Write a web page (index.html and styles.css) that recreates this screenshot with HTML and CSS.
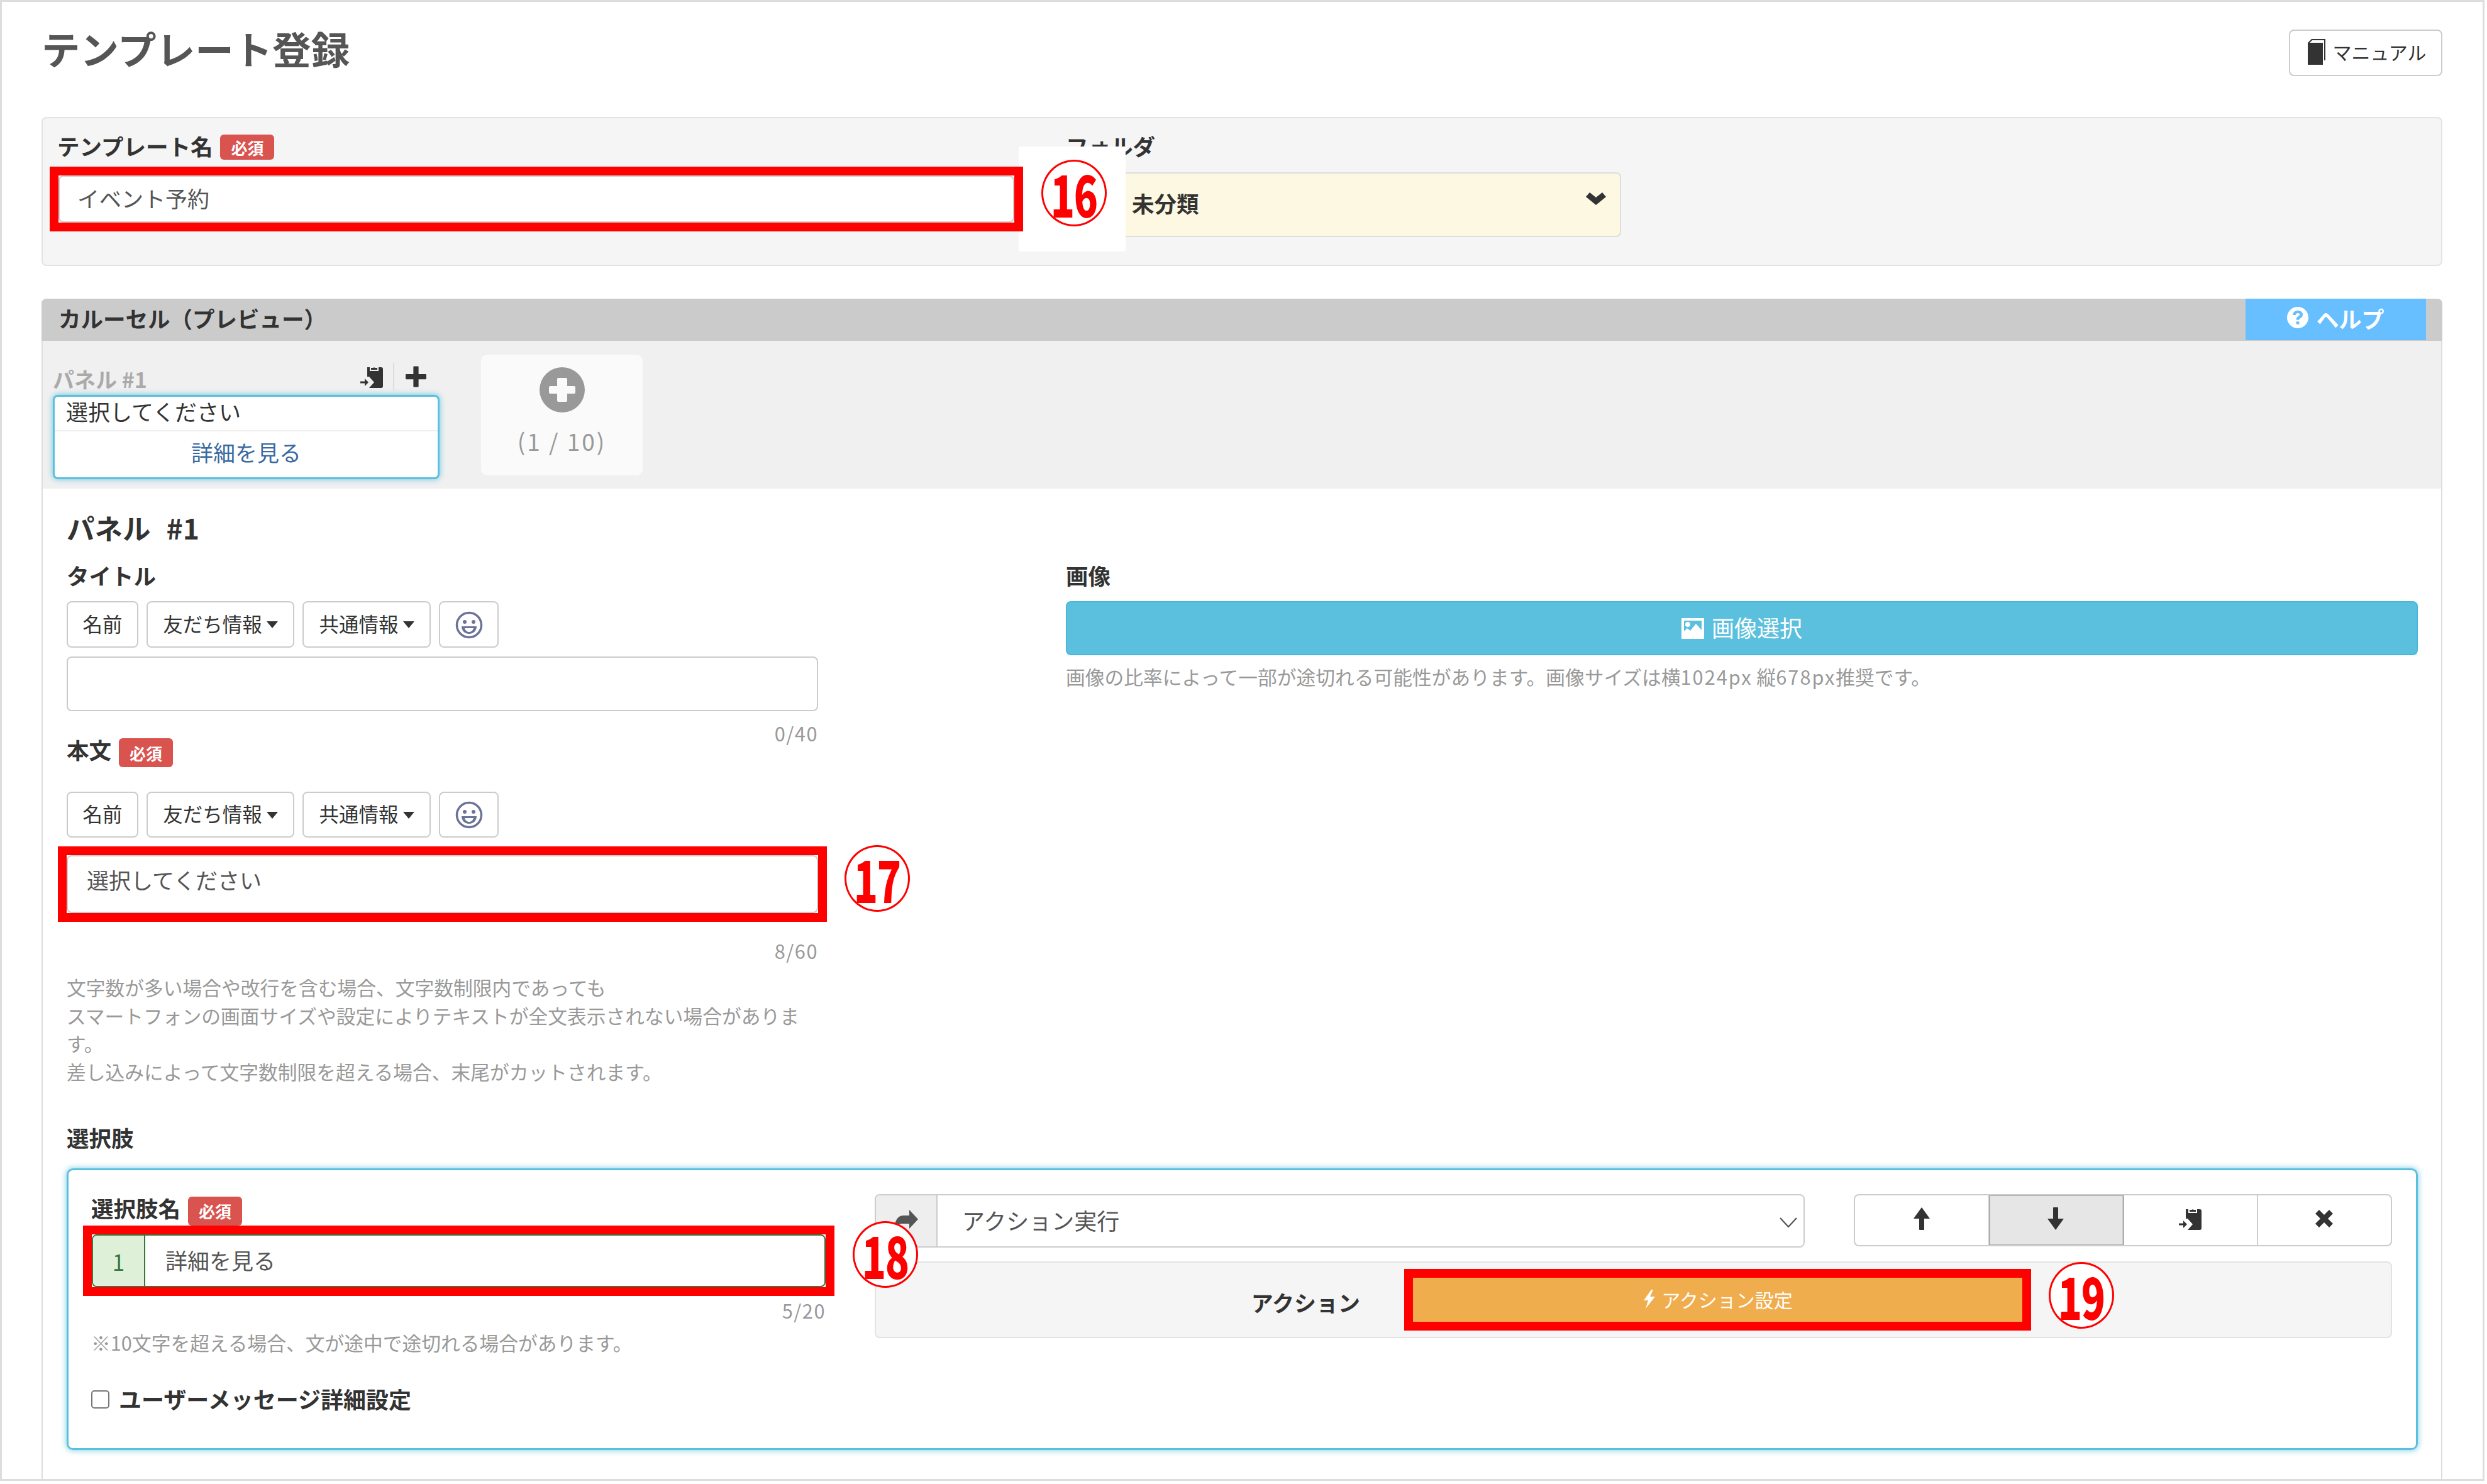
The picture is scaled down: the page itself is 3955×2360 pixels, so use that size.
FILE: index.html
```html
<!DOCTYPE html>
<html lang="ja">
<head>
<meta charset="utf-8">
<title>テンプレート登録</title>
<link rel="stylesheet" href="styles.css">
</head>
<body>
<svg class="sprite" width="0" height="0" aria-hidden="true">
  <defs>
    <symbol id="i-paste" viewBox="0 0 36 36"><path d="M11 3h4v6h14V3h4a3 3 0 0 1 3 3v27a3 3 0 0 1-3 3H14l8-9-8-9h-3z"/><path d="M17 7V4h3.500a2 2 0 0 1 3 0H27v3z"/><path d="M0 25.500h7V21l6 6-6 6v-4.500H0z"/></symbol>
    <symbol id="i-plus" viewBox="0 0 32 32"><path d="M12 1a1 1 0 0 1 1-1h6a1 1 0 0 1 1 1v11h11a1 1 0 0 1 1 1v6a1 1 0 0 1-1 1H20v11a1 1 0 0 1-1 1h-6a1 1 0 0 1-1-1V20H1a1 1 0 0 1-1-1v-6a1 1 0 0 1 1-1h11z"/></symbol>
    <symbol id="i-plus-circle" viewBox="0 0 72 72"><path fill-rule="evenodd" d="M36 0a36 36 0 1 0 0 72 36 36 0 0 0 0-72z M30 17h12a2 2 0 0 1 2 2v11h11a2 2 0 0 1 2 2v8a2 2 0 0 1-2 2H44v11a2 2 0 0 1-2 2H30a2 2 0 0 1-2-2V42H17a2 2 0 0 1-2-2v-8a2 2 0 0 1 2-2h11V19a2 2 0 0 1 2-2z"/></symbol>
    <symbol id="i-help" viewBox="0 0 36 36"><path fill-rule="evenodd" d="M18 0a18 18 0 1 0 0 36 18 18 0 0 0 0-36z M18 6c5 0 8.500 3 8.500 7 0 3-1.500 4.600-3.800 6-1.600 1-2.200 1.600-2.200 3h-5c0-3.400 1.300-5 3.600-6.400 1.400-.9 2.200-1.500 2.200-2.600 0-1.400-1.300-2.300-3.100-2.300-2 0-3.300 1.100-3.500 3.100h-5C9.900 9 13.200 6 18 6z M15.500 24.500h5v5h-5z"/></symbol>
    <symbol id="i-book" viewBox="0 0 30 42"><path d="M1 7 7 1h22v34h-2V3H8L4 7h21v35H1z"/></symbol>
    <symbol id="i-flash" viewBox="0 0 22 30"><path d="M14 0 2 17h7L5 30 20 11h-8l5-11z"/></symbol>
    <symbol id="i-up" viewBox="0 0 28 36"><path d="M14 0 27 18h-9v17a1 1 0 0 1-1 1h-6a1 1 0 0 1-1-1V18H1z"/></symbol>
    <symbol id="i-down" viewBox="0 0 28 36"><path d="M14 36 27 18h-9V1a1 1 0 0 0-1-1h-6a1 1 0 0 0-1 1v17H1z"/></symbol>
    <symbol id="i-x" viewBox="0 0 30 30"><path d="M1 7 7 1l8 8 8-8 6 6-8 8 8 8-6 6-8-8-8 8-6-6 8-8z"/></symbol>
    <symbol id="i-share" viewBox="0 0 38 36"><path d="M24 0 38 15 24 30v-8H12C6 22 3 26 1 33 0 20 4 9 15 9h9z"/></symbol>
    <symbol id="i-chev" viewBox="0 0 32 20"><path d="M16 20 0 7l6-7 10 8L26 0l6 7z"/></symbol>
    <symbol id="i-picture" viewBox="0 0 36 33"><path fill-rule="evenodd" d="M1 0h34a1 1 0 0 1 1 1v31a1 1 0 0 1-1 1H1a1 1 0 0 1-1-1V1a1 1 0 0 1 1-1z M4 4v17l5-5 5 4 9-11 9 10V4z M10 6a4 4 0 1 1 0 8 4 4 0 0 1 0-8z"/></symbol>
    <symbol id="i-smile" viewBox="0 0 44 44"><circle cx="22" cy="22" r="19.500" fill="none" stroke="currentColor" stroke-width="3.500"/><circle cx="15" cy="17" r="3"/><circle cx="29" cy="17" r="3"/><path d="M10 24h24c0 7-5 12-12 12S10 31 10 24z M15 27c1 3.500 3.500 6 7 6s6-2.500 7-6z" fill-rule="evenodd"/></symbol>
  </defs>
</svg>

<main class="frame">
  <header class="page-head">
    <h1 class="page-title">テンプレート登録</h1>
    <a class="btn-manual"><svg class="ic ic-book"><use href="#i-book"/></svg>マニュアル</a>
  </header>

  <section class="well-top">
    <div class="field-name">
      <div class="label-row"><label class="label">テンプレート名</label><span class="badge">必須</span></div>
      <div class="anchor">
        <div class="input input-name">イベント予約</div>
        <div class="patch"></div>
        <div class="mark"></div>
        <span class="num num-16"><b>16</b></span>
      </div>
    </div>
    <div class="field-folder">
      <div class="label-row"><label class="label">フォルダ</label></div>
      <div class="folder-select"><span>未分類</span><svg class="ic ic-chev"><use href="#i-chev"/></svg></div>
    </div>
  </section>

  <section class="carousel">
    <div class="carousel-head">
      <h2 class="carousel-title">カルーセル（プレビュー）</h2>
      <a class="btn-help"><svg class="ic ic-help"><use href="#i-help"/></svg>ヘルプ</a>
    </div>

    <div class="preview">
      <div class="preview-col">
        <div class="preview-tools">
          <span class="preview-label">パネル #1</span>
          <span class="tool tool-paste"><svg class="ic ic-paste"><use href="#i-paste"/></svg></span>
          <span class="tool tool-plus"><svg class="ic ic-plus"><use href="#i-plus"/></svg></span>
        </div>
        <div class="preview-card">
          <div class="preview-text">選択してください</div>
          <div class="preview-link">詳細を見る</div>
        </div>
      </div>
      <div class="add-card">
        <svg class="ic ic-add"><use href="#i-plus-circle"/></svg>
        <span class="add-count">(1 / 10)</span>
      </div>
    </div>

    <div class="panel">
      <h3 class="panel-title">パネル #1</h3>
      <div class="panel-grid">
        <div class="col-text">
          <label class="label label-title">タイトル</label>
          <div class="toolbar">
            <a class="btn btn-name">名前</a>
            <a class="btn btn-friend">友だち情報<i class="caret"></i></a>
            <a class="btn btn-common">共通情報<i class="caret"></i></a>
            <a class="btn btn-emoji"><svg class="ic ic-smile"><use href="#i-smile"/></svg></a>
          </div>
          <div class="input input-title"></div>
          <div class="counter counter-title">0/40</div>

          <div class="label-row label-body"><label class="label">本文</label><span class="badge">必須</span></div>
          <div class="toolbar toolbar-body">
            <a class="btn btn-name">名前</a>
            <a class="btn btn-friend">友だち情報<i class="caret"></i></a>
            <a class="btn btn-common">共通情報<i class="caret"></i></a>
            <a class="btn btn-emoji"><svg class="ic ic-smile"><use href="#i-smile"/></svg></a>
          </div>
          <div class="anchor anchor-body">
            <div class="input input-body">選択してください</div>
            <div class="mark"></div>
            <span class="num num-17"><b>17</b></span>
          </div>
          <div class="counter counter-body">8/60</div>
          <p class="help-text">文字数が多い場合や改行を含む場合、文字数制限内であっても<br>スマートフォンの画面サイズや設定によりテキストが全文表示されない場合がありま<br>す。<br>差し込みによって文字数制限を超える場合、末尾がカットされます。</p>
        </div>

        <div class="col-image">
          <label class="label label-title">画像</label>
          <a class="btn-image"><svg class="ic ic-picture"><use href="#i-picture"/></svg>画像選択</a>
          <p class="image-note">画像の比率によって一部が途切れる可能性があります。画像サイズは横<span class="latin">1024px</span> 縦<span class="latin">678px</span>推奨です。</p>
        </div>
      </div>

      <label class="label label-choice">選択肢</label>

      <div class="choice">
        <div class="choice-left">
          <div class="label-row label-choice-name"><label class="label">選択肢名</label><span class="badge">必須</span></div>
          <div class="anchor">
            <div class="input-group">
              <span class="addon-num">1</span>
              <span class="choice-input">詳細を見る</span>
            </div>
            <div class="mark"></div>
            <span class="num num-18"><b>18</b></span>
          </div>
          <div class="counter counter-choice">5/20</div>
          <p class="choice-note">※10文字を超える場合、文が途中で途切れる場合があります。</p>
          <label class="check-row"><span class="checkbox"></span>ユーザーメッセージ詳細設定</label>
        </div>

        <div class="choice-right">
          <div class="choice-top">
            <div class="action-select">
              <span class="addon-share"><svg class="ic ic-share"><use href="#i-share"/></svg></span>
              <span class="select-value">アクション実行</span>
              <svg class="select-chev" viewBox="0 0 28 16"><path d="M1 1l13 14L27 1" fill="none" stroke="#555" stroke-width="2.200"/></svg>
            </div>
            <div class="btn-group">
              <a class="seg"><svg class="ic ic-move"><use href="#i-up"/></svg></a>
              <a class="seg seg-active"><svg class="ic ic-move"><use href="#i-down"/></svg></a>
              <a class="seg"><svg class="ic ic-paste-lg"><use href="#i-paste"/></svg></a>
              <a class="seg"><svg class="ic ic-x"><use href="#i-x"/></svg></a>
            </div>
          </div>
          <div class="action-well">
            <span class="action-label">アクション</span>
            <div class="anchor anchor-action">
              <a class="btn-action"><svg class="ic ic-flash"><use href="#i-flash"/></svg>アクション設定</a>
              <div class="mark"></div>
              <span class="num num-19"><b>19</b></span>
            </div>
          </div>
        </div>
      </div>
    </div>
  </section>
</main>
</body>
</html>
```
FILE: styles.css
```css
* { box-sizing: border-box; }
html, body { margin: 0; padding: 0; background: #fff; }
body {
  font-family: "Noto Sans CJK JP", "Noto Sans", sans-serif;
  color: #333;
  width: 3955px;
  height: 2360px;
  overflow: hidden;
}
.sprite { position: absolute; }
.ic { display: block; fill: currentColor; flex: none; }
label { display: block; }
h1, h2, h3, p { margin: 0; }

.frame {
  width: 3951px;
  height: 2355px;
  border: 3px solid #ddd;
  padding: 44px 64px 0 63px;
  overflow: hidden;
}

/* header */
.page-head { display: flex; justify-content: space-between; align-items: flex-start; height: 139px; }
.page-title { font-size: 61.5px; line-height: 60px; font-weight: 700; color: #555; }
.btn-manual {
  display: flex; align-items: center; justify-content: center; gap: 10px;
  width: 244px; height: 74px;
  padding: 0 0 4px 4px;
  border: 2px solid #ccc; border-radius: 8px;
  font-size: 30px; color: #333;
}
.ic-book { width: 30px; height: 42px; }

/* labels */
.label { font-size: 35.5px; line-height: 36px; padding-bottom: 4px; font-weight: 700; color: #333; }
.label-row { display: flex; align-items: center; gap: 12px; height: 40px; }
.badge {
  display: flex; align-items: center; justify-content: center;
  width: 86px; height: 40px;
  background: #d9534f; border-radius: 6px;
  color: #fff; font-size: 26px; font-weight: 700;
}

/* top well */
.well-top {
  display: flex; gap: 82px;
  height: 237px;
  padding: 26px 0 0 23px;
  background: #f5f5f5;
  border: 2px solid #e3e3e3; border-radius: 8px;
}
.field-name { width: 1522px; position: relative; z-index: 1; }
.field-folder { width: 883px; }
.anchor { position: relative; }
.field-name .anchor { margin-top: 25px; margin-left: 2px; }
.input {
  background: #fff; border: 2px solid #ccc; border-radius: 8px;
  font-size: 35px; color: #555;
}
.input-name { height: 75px; line-height: 67px; padding-left: 28px; }

.folder-select {
  display: flex; align-items: center; justify-content: space-between;
  height: 103px; margin-top: 20px;
  padding: 0 22px 0 103px;
  background: #fdf8e2;
  border: 2px solid #ddd; border-radius: 8px;
  font-size: 35.5px; line-height: 44px; font-weight: 700; color: #333;
}
.folder-select span { padding-bottom: 6px; }
.ic-chev { width: 32px; height: 20px; margin-top: -20px; }

/* annotation overlays */
.mark { position: absolute; inset: -14px; border: 14px solid #f00; pointer-events: none; }
.patch { position: absolute; left: calc(100% + 7px); top: -46px; width: 170px; height: 167px; background: #fff; }
.num {
  position: absolute; z-index: 2;
  display: flex; align-items: center; justify-content: center;
  width: 104px; height: 106px;
  background: #fff; border: 3px solid #f00; border-radius: 50%;
  color: #f00;
}
.num b {
  display: block;
  font-size: 90px; line-height: 100px; font-weight: 900;
  letter-spacing: -2px;
  transform: scaleX(.7);
}
.num-16 { left: calc(100% + 43px); top: -25px; }
.num-17 { left: calc(100% + 42px); top: -16px; }
.num-18 { left: calc(100% + 43px); top: -21px; }
.num-19 { left: calc(100% + 42px); top: -25px; }

/* carousel */
.carousel {
  margin-top: 52px;
  height: 1890px;
  border: solid #ddd; border-width: 0 2px;
  border-radius: 8px 8px 0 0;
}
.carousel-head {
  display: flex; justify-content: space-between;
  height: 67px; margin: 0 -2px;
  padding: 0 26px 0 27px;
  background: #cbcbcb;
  border-radius: 8px 8px 0 0;
}
.carousel-title { font-size: 35.5px; line-height: 62px; font-weight: 700; color: #333; }
.btn-help {
  display: flex; align-items: center; justify-content: center; gap: 12px;
  width: 287px; height: 66px;
  padding-bottom: 4px;
  background: #67bfff; color: #fff;
  font-size: 36px; font-weight: 700;
}
.ic-help { width: 34px; height: 34px; margin-top: -2px; }

.preview {
  display: flex; align-items: flex-start; gap: 66px;
  height: 235px;
  padding: 22px 0 0 16px;
  background: #f0f0f0;
}
.preview-col { width: 615px; margin-top: 10px; }
.preview-tools { display: flex; align-items: center; height: 54px; }
.preview-label { flex: 1; font-size: 34px; font-weight: 700; color: #aaa; padding-top: 4px; line-height: 46px; }
.tool { display: flex; align-items: center; justify-content: center; height: 44px; }
.tool-paste { padding-right: 16px; border-right: 2px solid #ddd; margin-top: -4px; }
.tool-plus { padding: 0 21px 0 18px; margin-top: -4px; }
.ic-paste { width: 36px; height: 36px; }
.ic-plus { width: 33px; height: 34px; }
.preview-card {
  height: 134px;
  background: #fff;
  border: 3px solid #5bc0de; border-radius: 8px;
  box-shadow: 0 0 8px 1px rgba(91, 192, 222, .75);
}
.preview-text { height: 55px; padding-left: 18px; font-size: 35px; line-height: 46px; color: #333; border-bottom: 2px solid #eee; }
.preview-link { text-align: center; font-size: 35px; line-height: 66px; color: #3a6a9f; }
.add-card {
  display: flex; flex-direction: column; align-items: center;
  width: 257px; height: 192px;
  padding-top: 20px;
  background: #fafafa; border-radius: 10px;
}
.ic-add { width: 72px; height: 72px; fill: #999; color: #999; }
.add-count { margin-top: 20px; font-size: 37px; line-height: 50px; color: #999; letter-spacing: 3px; }

/* panel */
.panel { padding: 38px 0 0 38px; background: #fff; }
.panel-title { font-size: 44.5px; line-height: 48px; padding-bottom: 2px; font-weight: 700; word-spacing: 15px; color: #333; }
.panel-grid { display: flex; gap: 394px; }
.col-text { width: 1195px; }
.col-image { width: 2150px; }
.label-title { margin-top: 32px; }
.toolbar { display: flex; gap: 13px; margin-top: 19px; }
.toolbar-body { margin-top: 39px; }
.btn {
  display: flex; align-items: center; justify-content: center; gap: 7px;
  height: 74px;
  padding-bottom: 5px;
  background: #fff; border: 2px solid #ccc; border-radius: 8px;
  font-size: 31.5px; color: #333;
}
.toolbar-body .btn { height: 73px; }
.btn-name { width: 114px; }
.btn-friend { width: 235px; }
.btn-common { width: 204px; }
.btn-emoji { width: 95px; }
.caret { width: 0; height: 0; border: 9px solid transparent; border-top: 11px solid #333; border-bottom: 0; margin-top: 6px; }
.ic-smile { width: 44px; height: 44px; color: #6b7396; fill: #6b7396; margin-top: 6px; }
.input-title { height: 87px; margin-top: 14px; }
.counter { text-align: right; font-size: 30.75px; line-height: 12px; padding-bottom: 4px; letter-spacing: 1.5px; color: #999; }
.counter-title { margin-top: 29px; }
.label-body { height: 46px; margin-top: -2px; }
.label-body .label { margin-bottom: 6px; }
.label-body .badge, .label-choice-name .badge { height: 46px; }
.anchor-body { margin-top: 28px; }
.input-body { height: 92px; line-height: 74px; padding-left: 30px; }
.counter-body { margin-top: 54px; }
.help-text { margin-top: 26px; font-size: 30.75px; line-height: 44.5px; color: #999; }

.image-note { margin-top: 14px; font-size: 30.75px; line-height: 40px; color: #999; }
.latin { letter-spacing: 2px; }
.btn-image {
  display: flex; align-items: center; justify-content: center; gap: 12px;
  height: 86px; margin-top: 19px;
  padding-bottom: 4px;
  background: #5bc0de; border: 2px solid #46b8da; border-radius: 8px;
  color: #fff; font-size: 36px;
}
.ic-picture { width: 36px; height: 33px; margin-top: 4px; }

.label-choice { margin-top: 65px; }

.choice {
  display: flex; gap: 78px;
  height: 448px; width: 3739px;
  margin: 27px 0 0 0;
  padding: 38px 38px 0 37px;
  border: 3px solid #5bc0de; border-radius: 10px;
  box-shadow: 0 0 10px 1px rgba(91, 192, 222, .7);
}
.choice-left { width: 1167px; padding-top: 4px; }
.choice-right { width: 2413px; }
.label-choice-name { height: 45px; margin-bottom: 15px; }
.label-choice-name .label { margin-bottom: 6px; margin-left: -1px; }
.input-group {
  display: flex; height: 84px;
  background: #fff; border: 2px solid #3c763d; border-radius: 8px; overflow: hidden;
}
.addon-num {
  display: flex; align-items: center; justify-content: center;
  width: 83px;
  background: #dff0d8; border-right: 2px solid #3c763d;
  font-size: 35px; color: #3c763d;
}
.choice-input { padding-left: 32px; font-size: 35px; line-height: 78px; color: #555; }
.counter-choice { margin-top: 31px; }
.choice-note { margin-top: 21px; margin-left: -1px; padding-bottom: 2px; font-size: 30.75px; line-height: 40px; color: #999; }
.check-row { display: flex; align-items: center; gap: 15px; margin-top: 45px; margin-left: -1px; height: 44px; font-size: 36px; font-weight: 700; color: #333; }
.checkbox { width: 29px; height: 29px; background: #fff; border: 2px solid #767676; border-radius: 5px; margin-top: 2px; }

.choice-top { display: flex; justify-content: space-between; height: 85px; }
.action-select {
  display: flex; align-items: center;
  width: 1479px; height: 85px;
  border: 2px solid #ccc; border-radius: 8px; overflow: hidden;
}
.addon-share {
  display: flex; align-items: center; justify-content: center;
  width: 98px; height: 100%;
  background: #eee; border-right: 2px solid #ccc; color: #555;
}
.ic-share { width: 38px; height: 36px; }
.select-value { flex: 1; padding-left: 39px; padding-bottom: 4px; font-size: 36px; color: #555; }
.select-chev { width: 28px; height: 16px; margin-right: 10px; margin-top: 4px; }
.btn-group {
  display: flex;
  width: 856px; height: 83px;
  border: 2px solid #ccc; border-radius: 8px; overflow: hidden;
}
.seg { flex: 1; display: flex; align-items: center; justify-content: center; border-right: 2px solid #ccc; color: #333; padding-bottom: 6px; }
.seg:last-child { border-right: 0; }
.seg-active { background: #e6e6e6; outline: 2px solid #adadad; outline-offset: -1px; }
.ic-move { width: 28px; height: 36px; }
.ic-paste-lg { width: 36px; height: 36px; }
.ic-x { width: 30px; height: 30px; }

.action-well {
  display: flex; align-items: center;
  height: 122px; margin-top: 22px;
  background: #f5f5f5; border: 2px solid #e3e3e3; border-radius: 8px;
}
.action-label { width: 770px; text-align: right; font-size: 35px; font-weight: 700; color: #333; padding-top: 6px; }
.anchor-action { margin-left: 84px; width: 969px; }
.btn-action {
  display: flex; align-items: center; justify-content: center; gap: 8px;
  height: 70px;
  padding-bottom: 3px;
  background: #f0ad4e; color: #fff; font-size: 30px;
}
.ic-flash { width: 22px; height: 30px; }
```
